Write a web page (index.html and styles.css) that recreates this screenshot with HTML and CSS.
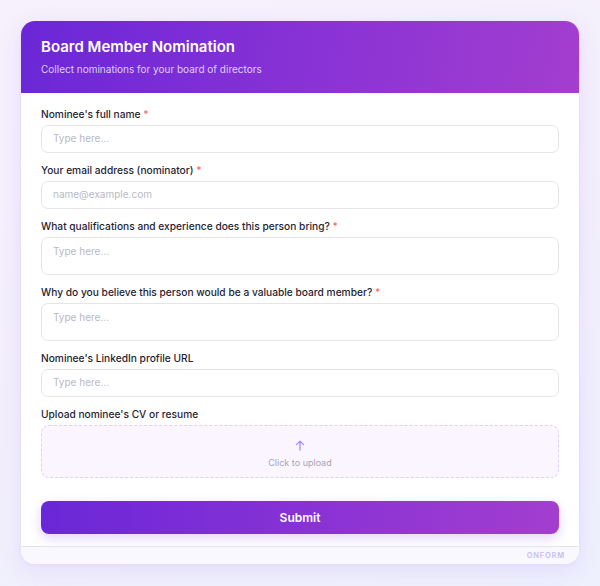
FILE: index.html
```html
<!DOCTYPE html>
<html>
<head>
<meta charset="utf-8">
<link rel="stylesheet" href="styles.css">
</head>
<body>
<div class="page">
  <div class="card">
    <div class="header">
      <h1 class="title">Board Member Nomination</h1>
      <p class="subtitle">Collect nominations for your board of directors</p>
    </div>
    <div class="body">
      <div class="fields">
        <div class="field">
          <label class="label">Nominee's full name <span class="req">*</span></label>
          <div class="input">Type here...</div>
        </div>
        <div class="field">
          <label class="label">Your email address (nominator) <span class="req">*</span></label>
          <div class="input">name@example.com</div>
        </div>
        <div class="field">
          <label class="label">What qualifications and experience does this person bring? <span class="req">*</span></label>
          <div class="input textarea">Type here...</div>
        </div>
        <div class="field">
          <label class="label">Why do you believe this person would be a valuable board member? <span class="req">*</span></label>
          <div class="input textarea">Type here...</div>
        </div>
        <div class="field">
          <label class="label">Nominee's LinkedIn profile URL</label>
          <div class="input">Type here...</div>
        </div>
        <div class="field">
          <label class="label">Upload nominee's CV or resume</label>
          <div class="upload">
            <svg class="upload-icon" width="10" height="11" viewBox="0 0 10 11" fill="none" stroke="#a78bfa" stroke-width="1.3" stroke-linecap="round" stroke-linejoin="round"><path d="M5 10V1.2M1.4 4.6L5 1.2l3.6 3.4"/></svg>
            <span class="upload-text">Click to upload</span>
          </div>
        </div>
      </div>
      <button class="submit">Submit</button>
    </div>
    <div class="footer">ONFORM</div>
  </div>
</div>
</body>
</html>
```
FILE: styles.css
```css
html, body {
  margin: 0;
  padding: 0;
}
body {
  font-family: Inter, "Noto Sans", sans-serif;
  background: linear-gradient(160deg, #f6f1fc 0%, #f3effc 50%, #eef0fd 100%);
  width: 600px;
  height: 586px;
  overflow: hidden;
}
.page {
  padding: 21px;
}
.card {
  width: 558px;
  background: #ffffff;
  border-radius: 14px;
  overflow: hidden;
  box-shadow: 0 6px 24px rgba(124, 58, 237, 0.10), 0 1px 4px rgba(124, 58, 237, 0.06);
}
.header {
  height: 72px;
  box-sizing: border-box;
  padding: 17px 20px 0;
  background: linear-gradient(100deg, #6a27d7 0%, #8a33d5 55%, #a33ecf 100%);
  color: #fff;
}
.title {
  margin: 0;
  font-size: 15px;
  line-height: 18px;
  font-weight: 600;
  letter-spacing: 0;
}
.subtitle {
  margin: 6px 0 0;
  font-size: 10px;
  line-height: 14px;
  color: rgba(255, 255, 255, 0.78);
}
.body {
  padding: 13px 20px 12px;
}
.fields {
  display: flex;
  flex-direction: column;
  gap: 9px;
}
.field {
  display: flex;
  flex-direction: column;
  gap: 4px;
}
.label {
  padding-top: 1px;
  font-size: 10.2px;
  line-height: 14px;
  font-weight: 500;
  color: #1f2433;
}
.req {
  color: #f87171;
}
.input {
  height: 28px;
  box-sizing: border-box;
  border: 1.5px solid #e4e4ea;
  border-radius: 7px;
  padding: 0 11px;
  font-size: 10px;
  line-height: 25px;
  color: #b9b9c4;
}
.textarea {
  height: 38px;
  line-height: 14px;
  padding-top: 6px;
}
.upload {
  height: 53px;
  box-sizing: border-box;
  border: 1.5px dashed #ddd0fb;
  border-radius: 8px;
  background: #faf5ff;
  display: flex;
  flex-direction: column;
  align-items: center;
  justify-content: center;
  gap: 6px;
  padding-top: 5px;
}
.upload-icon {
  display: block;
}
.upload-text {
  font-size: 9px;
  line-height: 11px;
  color: #a9a3b6;
}
.submit {
  display: block;
  width: 100%;
  height: 33px;
  margin-top: 23px;
  border: none;
  border-radius: 8px;
  background: linear-gradient(90deg, #6a27d7 0%, #8a33d5 55%, #a33ecf 100%);
  color: #fff;
  font-family: Inter, "Noto Sans", sans-serif;
  font-size: 12px;
  font-weight: 600;
  box-shadow: 0 4px 12px rgba(124, 58, 237, 0.22);
}
.footer {
  height: 18px;
  box-sizing: border-box;
  border-top: 1px solid #e6e1f0;
  background: #faf8ff;
  text-align: right;
  padding-right: 14px;
  font-size: 7.5px;
  line-height: 18px;
  font-weight: 600;
  letter-spacing: 0.8px;
  color: #c8bcf5;
}
```
